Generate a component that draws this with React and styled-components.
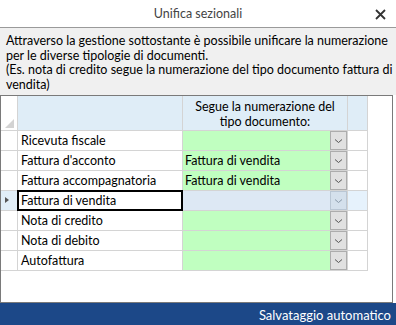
import React from "react";
import styled, { createGlobalStyle } from "styled-components";

const GlobalStyle = createGlobalStyle`
    html, body {
        margin: 0;
        padding: 0;
        background: #ffffff;
    }
    body {
        font-family: Lato, "Noto Sans", sans-serif;
        font-size: 12.5px;
        color: #000;
    }
`;

const Window = styled.div`
    width: 396px;
    height: 325px;
    display: flex;
    flex-direction: column;
    background: #ffffff;
    overflow: hidden;
`;

const TitleBar = styled.div`
    height: 27px;
    flex: none;
    display: flex;
    align-items: center;
    justify-content: center;
    position: relative;
    border-bottom: 1px solid #9a9a9a;
    color: #444;
    font-size: 12.5px;
`;

const CloseButton = styled.div`
    position: absolute;
    right: 10px;
    top: 8px;
    width: 12px;
    height: 12px;
    display: flex;
    align-items: center;
    justify-content: center;
`;

const Info = styled.div`
    flex: none;
    height: 67px;
    box-sizing: border-box;
    padding: 6px 6px 0 6px;
    background: #f0f0f0;
    line-height: 14.5px;
    white-space: nowrap;
`;

const GridPanel = styled.div`
    flex: none;
    width: 393px;
    height: 208px;
    box-sizing: border-box;
    border: 1px solid #7a7a7a;
    background: #ffffff;
`;

const Grid = styled.div`
    display: grid;
    grid-template-columns: 16px 164px 164px 19px;
    grid-template-rows: 34px repeat(7, 19px);
    gap: 1px;
    width: max-content;
    padding: 0 1px 1px 0;
    background: #d4d4d4;
`;

const Corner = styled.div`
    background: #ffffff;
    position: relative;

    &::after {
        content: "";
        position: absolute;
        right: 3px;
        bottom: 2px;
        border-style: solid;
        border-width: 0 0 9px 9px;
        border-color: transparent transparent #d3d3d3 transparent;
    }
`;

const HeaderCell = styled.div`
    background: #dfedf7;
    display: flex;
    align-items: center;
    justify-content: center;
    text-align: center;
    line-height: 15px;
    padding-top: 1px;
    white-space: nowrap;
`;

const RowHeader = styled.div`
    background: ${(p) => (p.$current ? "#e1eef8" : "#ffffff")};
    position: relative;

    &::after {
        content: "";
        display: ${(p) => (p.$current ? "block" : "none")};
        position: absolute;
        left: 4px;
        top: 6px;
        border-style: solid;
        border-width: 3.5px 0 3.5px 4px;
        border-color: transparent transparent transparent #555;
    }
`;

const NameCell = styled.div`
    background: #ffffff;
    padding-left: 3px;
    display: flex;
    align-items: center;
    white-space: nowrap;
    outline: ${(p) => (p.$current ? "2px solid #000" : "none")};
    outline-offset: -1px;
    z-index: ${(p) => (p.$current ? 1 : 0)};
`;

const ComboCell = styled.div`
    background: ${(p) => (p.$current ? "#dde8f4" : "#c0ffc0")};
    display: flex;
    align-items: stretch;
`;

const ComboText = styled.div`
    flex: 1;
    padding-left: 2px;
    display: flex;
    align-items: center;
    white-space: nowrap;
`;

const DropButton = styled.div`
    width: 15px;
    box-sizing: content-box;
    border: 1px solid ${(p) => (p.$current ? "#b9c6d4" : "#adadad")};
    background: ${(p) => (p.$current ? "#d4e0ec" : "#e1e1e1")};
    display: flex;
    align-items: center;
    justify-content: center;
    margin-left: 1px;
`;

const EmptyCell = styled.div`
    background: ${(p) => (p.$current ? "#e6f2fc" : "#ffffff")};
`;

const HeaderBlank = styled.div`
    background: #dfedf7;
`;

const Spacer = styled.div`
    flex: 1;
`;

const Footer = styled.div`
    flex: none;
    height: 23px;
    background: #1c4888;
    color: #ffffff;
    display: flex;
    align-items: center;
    justify-content: flex-end;
    padding-right: 5px;
    font-size: 13px;
`;

const Chevron = ({ color }) => (
    <svg width="9" height="6" viewBox="0 0 9 6">
        <path d="M1 1.5 L4.5 4.5 L8 1.5" fill="none" stroke={color} strokeWidth="1" />
    </svg>
);

const rows = [
    { name: "Ricevuta fiscale", value: "" },
    { name: "Fattura d'acconto", value: "Fattura di vendita" },
    { name: "Fattura accompagnatoria", value: "Fattura di vendita" },
    { name: "Fattura di vendita", value: "", current: true },
    { name: "Nota di credito", value: "" },
    { name: "Nota di debito", value: "" },
    { name: "Autofattura", value: "" },
];

const App = () => (
    <Window>
        <GlobalStyle />
        <TitleBar>
            Unifica sezionali
            <CloseButton>
                <svg width="11" height="11" viewBox="0 0 11 11">
                    <path d="M1 1 L10 10 M10 1 L1 10" stroke="#333" strokeWidth="1.8" />
                </svg>
            </CloseButton>
        </TitleBar>
        <Info>
            Attraverso la gestione sottostante è possibile unificare la numerazione
            <br />
            per le diverse tipologie di documenti.
            <br />
            (Es. nota di credito segue la numerazione del tipo documento fattura di
            <br />
            vendita)
        </Info>
        <GridPanel>
            <Grid>
                <Corner />
                <HeaderBlank />
                <HeaderCell>
                    Segue la numerazione del
                    <br />
                    tipo documento:
                </HeaderCell>
                <HeaderBlank />
                {rows.map((r) => (
                    <React.Fragment key={r.name}>
                        <RowHeader $current={r.current} />
                        <NameCell $current={r.current}>{r.name}</NameCell>
                        <ComboCell $current={r.current}>
                            <ComboText>{r.value}</ComboText>
                            <DropButton $current={r.current}>
                                <Chevron color={r.current ? "#8a9aaa" : "#555"} />
                            </DropButton>
                        </ComboCell>
                        <EmptyCell $current={r.current} />
                    </React.Fragment>
                ))}
            </Grid>
        </GridPanel>
        <Spacer />
        <Footer>Salvataggio automatico</Footer>
    </Window>
);

export default App;
